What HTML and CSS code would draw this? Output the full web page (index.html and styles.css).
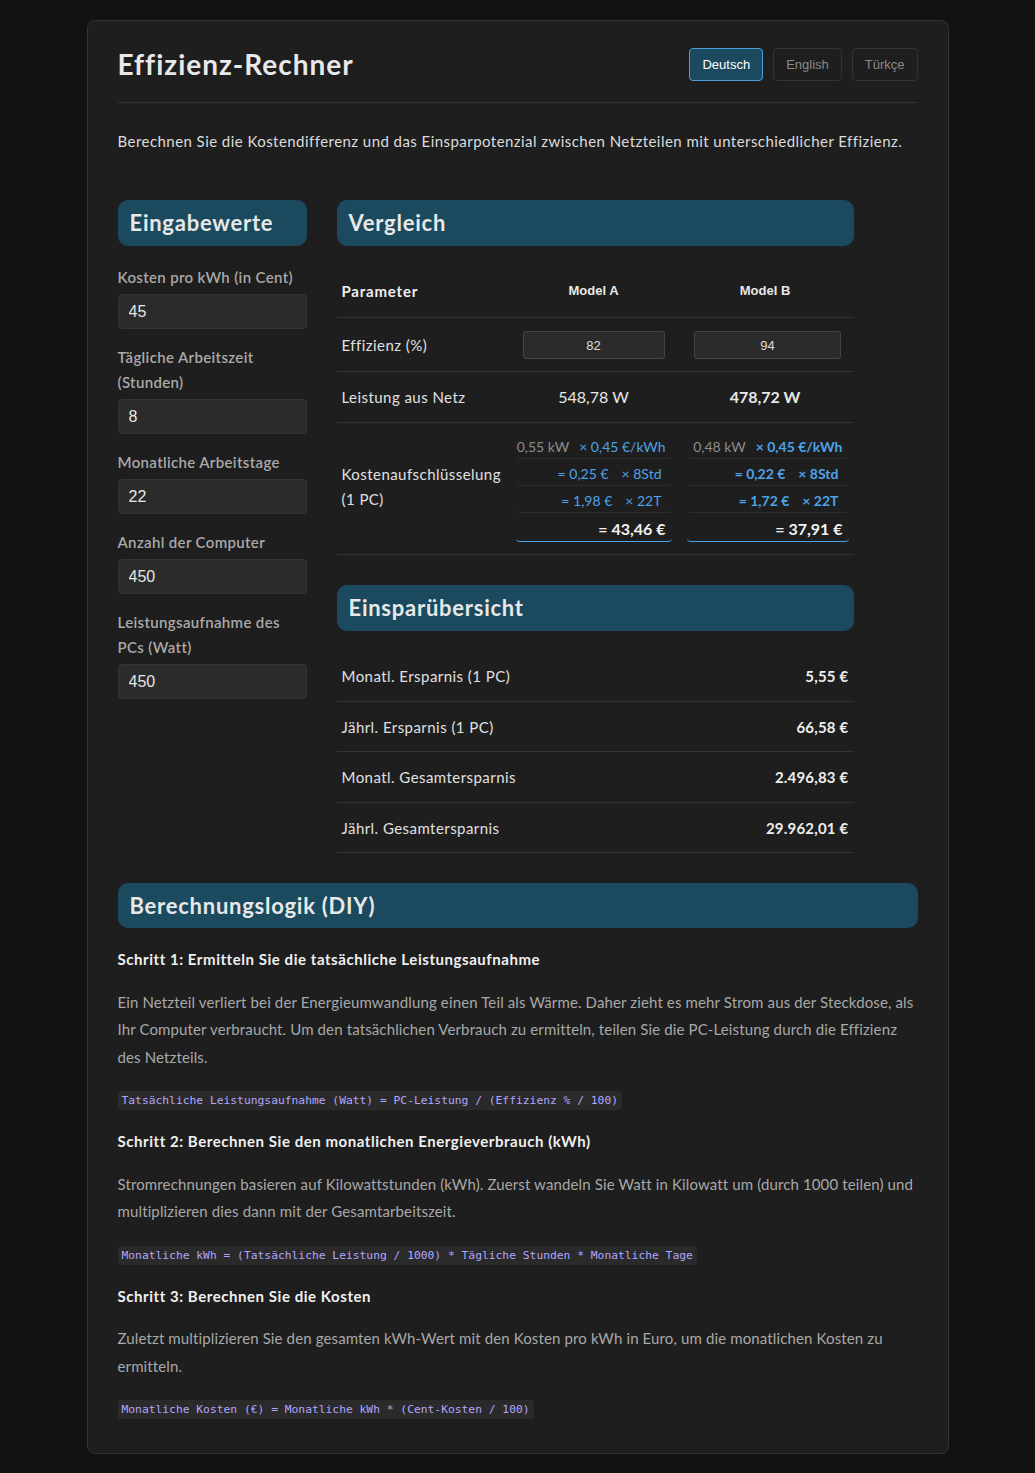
FILE: index.html
```html
<!DOCTYPE html>
<html lang="de">
<head>
<meta charset="utf-8">
<title>Effizienz-Rechner</title>
<link rel="stylesheet" href="styles.css">
</head>
<body>
<div class="container">
  <header class="header">
    <h1 class="title">Effizienz-Rechner</h1>
    <div class="lang">
      <button class="lang-btn active">Deutsch</button>
      <button class="lang-btn">English</button>
      <button class="lang-btn">Türkçe</button>
    </div>
  </header>

  <p class="intro">Berechnen Sie die Kostendifferenz und das Einsparpotenzial zwischen Netzteilen mit unterschiedlicher Effizienz.</p>

  <div class="grid">
    <section class="inputs">
      <h2 class="sec-title">Eingabewerte</h2>
      <label class="field-label first">Kosten pro kWh (in Cent)</label>
      <input class="field" type="text" value="45">
      <label class="field-label">Tägliche Arbeitszeit (Stunden)</label>
      <input class="field" type="text" value="8">
      <label class="field-label">Monatliche Arbeitstage</label>
      <input class="field" type="text" value="22">
      <label class="field-label">Anzahl der Computer</label>
      <input class="field" type="text" value="450">
      <label class="field-label">Leistungsaufnahme des PCs (Watt)</label>
      <input class="field" type="text" value="450">
    </section>

    <section class="results">
      <h2 class="sec-title">Vergleich</h2>
      <table class="cmp">
        <colgroup>
          <col class="col-param">
          <col class="col-a">
          <col class="col-b">
        </colgroup>
        <thead>
          <tr>
            <th class="th-param">Parameter</th>
            <th class="th-model">Model A</th>
            <th class="th-model">Model B</th>
          </tr>
        </thead>
        <tbody>
          <tr class="row-eff">
            <td>Effizienz (%)</td>
            <td><input class="eff eff-a" type="text" value="82"></td>
            <td class="cell-b"><input class="eff eff-b" type="text" value="94"></td>
          </tr>
          <tr>
            <td>Leistung aus Netz</td>
            <td class="val">548,78 W</td>
            <td class="val best">478,72 W</td>
          </tr>
          <tr class="row-cost">
            <td class="cost-label">Kostenaufschlüsselung (1 PC)</td>
            <td class="cost-cell">
              <div class="bd">
                <div class="bd-row"><span class="bd-kw">0,55 kW</span><span>× 0,45 €/kWh</span></div>
                <div class="bd-row inset"><span>= 0,25 €</span><span>× 8Std</span></div>
                <div class="bd-row inset"><span>= 1,98 €</span><span>× 22T</span></div>
                <div class="bd-row bd-total"><span>= 43,46 €</span></div>
              </div>
            </td>
            <td class="cost-cell cell-b">
              <div class="bd bd-best">
                <div class="bd-row"><span class="bd-kw">0,48 kW</span><span>× 0,45 €/kWh</span></div>
                <div class="bd-row inset"><span>= 0,22 €</span><span>× 8Std</span></div>
                <div class="bd-row inset"><span>= 1,72 €</span><span>× 22T</span></div>
                <div class="bd-row bd-total"><span>= 37,91 €</span></div>
              </div>
            </td>
          </tr>
        </tbody>
      </table>

      <h2 class="sec-title sec-gap">Einsparübersicht</h2>
      <table class="sum">
        <tbody>
          <tr><td>Monatl. Ersparnis (1 PC)</td><td class="sum-val">5,55 €</td></tr>
          <tr><td>Jährl. Ersparnis (1 PC)</td><td class="sum-val">66,58 €</td></tr>
          <tr><td>Monatl. Gesamtersparnis</td><td class="sum-val">2.496,83 €</td></tr>
          <tr><td>Jährl. Gesamtersparnis</td><td class="sum-val">29.962,01 €</td></tr>
        </tbody>
      </table>
    </section>
  </div>

  <section class="logic">
    <h2 class="sec-title sec-short">Berechnungslogik (DIY)</h2>

    <h4 class="step">Schritt 1: Ermitteln Sie die tatsächliche Leistungsaufnahme</h4>
    <p class="step-text">Ein Netzteil verliert bei der Energieumwandlung einen Teil als Wärme. Daher zieht es mehr Strom aus der Steckdose, als Ihr Computer verbraucht. Um den tatsächlichen Verbrauch zu ermitteln, teilen Sie die PC-Leistung durch die Effizienz des Netzteils.</p>
    <div class="formula"><code>Tatsächliche Leistungsaufnahme (Watt) = PC-Leistung / (Effizienz % / 100)</code></div>

    <h4 class="step">Schritt 2: Berechnen Sie den monatlichen Energieverbrauch (kWh)</h4>
    <p class="step-text">Stromrechnungen basieren auf Kilowattstunden (kWh). Zuerst wandeln Sie Watt in Kilowatt um (durch 1000 teilen) und multiplizieren dies dann mit der Gesamtarbeitszeit.</p>
    <div class="formula"><code>Monatliche kWh = (Tatsächliche Leistung / 1000) * Tägliche Stunden * Monatliche Tage</code></div>

    <h4 class="step">Schritt 3: Berechnen Sie die Kosten</h4>
    <p class="step-text">Zuletzt multiplizieren Sie den gesamten kWh-Wert mit den Kosten pro kWh in Euro, um die monatlichen Kosten zu ermitteln.</p>
    <div class="formula"><code>Monatliche Kosten (€) = Monatliche kWh * (Cent-Kosten / 100)</code></div>
  </section>
</div>
</body>
</html>
```

FILE: styles.css
```css
* {
  box-sizing: border-box;
}

body {
  margin: 0;
  background: #121212;
  font-family: Lato, "Open Sans", sans-serif;
  letter-spacing: 0.45px;
  color: #e0e0e0;
}

.container {
  width: 862px;
  margin: 20px auto;
  background: #1e1e1e;
  border: 1px solid #333;
  border-radius: 8px;
  padding: 25px 30px 32px;
}

/* Header */
.header {
  display: flex;
  justify-content: space-between;
  align-items: center;
  padding-bottom: 19px;
  border-bottom: 1px solid #333;
}

.title {
  margin: 0;
  font-size: 28px;
  font-weight: 700;
  line-height: 37px;
  letter-spacing: 1px;
  color: #e8e8e8;
}

.lang {
  display: flex;
  gap: 10px;
}

.lang-btn {
  height: 33px;
  padding: 0 12px;
  font: 13px "Liberation Sans", Arial, sans-serif;
  letter-spacing: 0;
  color: #8a8a8a;
  background: transparent;
  border: 1px solid #333;
  border-radius: 4px;
}

.lang-btn.active {
  background: #1b4a5e;
  border-color: #4a9fd6;
  color: #ffffff;
}

.intro {
  margin: 26px 0 47px;
  font-size: 15px;
  line-height: 24px;
  color: #dcdcdc;
}

/* Grid */
.grid {
  display: grid;
  grid-template-columns: 189px 517px;
  column-gap: 30px;
  align-items: start;
}

.sec-title {
  margin: 0;
  height: 46px;
  line-height: 46px;
  padding: 0 12px;
  background: #1b4a5e;
  border-radius: 10px;
  font-size: 22px;
  font-weight: 700;
  letter-spacing: 0.75px;
  color: #e8e8e8;
}

/* Inputs */
.field-label {
  display: block;
  margin: 0 0 4px;
  font-size: 15px;
  font-weight: 600;
  line-height: 25px;
  letter-spacing: 0.35px;
  color: #a9a9a9;
}

.field-label.first {
  margin-top: 19px;
}

.field {
  display: block;
  width: 100%;
  height: 35px;
  margin: 0 0 16px;
  padding: 0 10px;
  background: #2b2b2b;
  border: 1px solid #333;
  border-radius: 4px;
  font: 16px "Liberation Sans", Arial, sans-serif;
  letter-spacing: 0;
  color: #e6e6e6;
}

/* Comparison table */
.cmp,
.sum {
  width: 100%;
  border-collapse: collapse;
  margin-top: 20px;
  table-layout: fixed;
}

.col-param { width: 174px; }
.col-a { width: 166px; }
.col-b { width: 177px; }

.cmp th,
.cmp td,
.sum td {
  padding: 15px 5px;
  line-height: 20px;
  font-size: 15px;
  text-align: left;
  border-bottom: 1px solid #333;
  color: #e0e0e0;
  font-weight: 400;
}

.cmp th {
  padding-bottom: 16px;
}

.cmp .th-param {
  font-weight: 700;
  letter-spacing: 0.8px;
  color: #f0f0f0;
}

.cmp .th-model {
  text-align: center;
  font: 700 13px/20px "Liberation Sans", Arial, sans-serif;
  letter-spacing: 0;
  color: #e8e8e8;
}

.cmp .row-eff td {
  padding-top: 13px;
  padding-bottom: 12px;
}

.eff {
  display: block;
  margin: 0 auto;
  height: 28px;
  background: #2b2b2b;
  border: 1px solid #444;
  border-radius: 3px;
  text-align: center;
  font: 13px "Liberation Sans", Arial, sans-serif;
  letter-spacing: 0;
  color: #dddddd;
}

.eff-a { width: 142px; }
.eff-b { width: 147px; }

.cmp .val {
  text-align: center;
  font-size: 16px;
  letter-spacing: 0;
  color: #e8e8e8;
}

.cmp .val.best {
  font-weight: 700;
}

.cmp .row-cost td {
  padding-top: 9px;
  padding-bottom: 12px;
}

.cmp .cell-b {
  padding-left: 10px;
}

.cmp .cost-label {
  line-height: 25px;
  vertical-align: middle;
}

.bd-row {
  display: flex;
  justify-content: flex-end;
  align-items: center;
  gap: 10px;
  height: 27px;
  padding: 4px 6px 0 0;
  border-bottom: 1px solid #2e2e2e;
  border-radius: 4px;
  font-size: 14px;
  letter-spacing: 0;
  color: #4da3e8;
}

.bd-row.inset {
  padding-right: 10px;
  gap: 13px;
}

.bd-kw {
  color: #8c8c8c;
}

.bd-best .bd-row {
  font-weight: 700;
}

.bd-best .bd-kw {
  font-weight: 400;
}

.bd-row.bd-total {
  height: 29px;
  font-size: 16px;
  font-weight: 700;
  color: #f2f2f2;
  border-bottom-color: #4da3e8;
}

/* Savings */
.sec-gap {
  margin-top: 30px;
}

.sum td {
  padding-bottom: 14.5px;
}

.sum .sum-val {
  text-align: right;
  font-weight: 700;
  letter-spacing: 0.2px;
  color: #eeeeee;
}

/* Logic */
.logic {
  margin-top: 30px;
}

.sec-short {
  height: 45px;
  line-height: 45px;
}

.step {
  margin: 19px 0 0;
  font-size: 15px;
  font-weight: 700;
  line-height: 20px;
  letter-spacing: 0.55px;
  color: #f0f0f0;
}

.logic .sec-short + .step {
  margin-top: 21px;
}

.step-text {
  margin: 19.5px 0 0;
  font-size: 15px;
  line-height: 27.5px;
  letter-spacing: 0.13px;
  color: #a8a8a8;
}

.formula {
  margin-top: 16px;
  line-height: 22px;
}

.formula code {
  font-family: "DejaVu Sans Mono", monospace;
  font-size: 11.3px;
  letter-spacing: 0;
  color: #b3a6ff;
  background: #2a2a2a;
  padding: 3px 4px;
  border-radius: 3px;
}
```
